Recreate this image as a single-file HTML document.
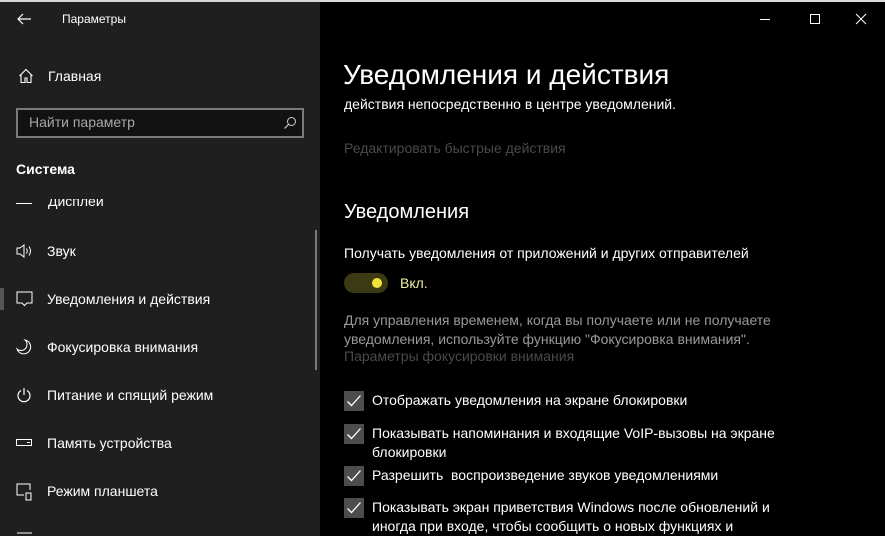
<!DOCTYPE html>
<html><head><meta charset="utf-8"><style>
*{margin:0;padding:0;box-sizing:border-box}
body{width:885px;height:536px;overflow:hidden;background:#000;font-family:"Segoe UI","Liberation Sans","DejaVu Sans",sans-serif;color:#fff;position:relative}
.abs{position:absolute;white-space:nowrap}
#side{position:absolute;left:0;top:0;width:320px;height:536px;background:#1f1f1f}
#topline{position:absolute;left:0;top:0;width:885px;height:2px;background:#d9d9d9}
.nav{font-size:14px;color:#fff}
.ic{position:absolute}
.cb{position:absolute;left:344px;width:20px;height:20px;background:#4d4d4d}
.cb svg{position:absolute;left:2px;top:2px}
.ct{font-size:14px;color:#fff;line-height:19px}
</style></head><body>
<div id="side">
 <svg class="ic" style="left:16px;top:12px" width="16" height="14" viewBox="0 0 16 14"><path d="M15 7H2M7 2L2 7l5 5" stroke="#fff" stroke-width="1.2" fill="none"/></svg>
 <div class="abs" style="left:62px;top:12px;font-size:12px">Параметры</div>
 <svg class="ic" style="left:18px;top:68px" width="16" height="16" viewBox="0 0 16 16"><path d="M1.5 8L8 1.5 14.5 8M3 6.5V14.5h4V10h2v4.5h4V6.5" stroke="#fff" stroke-width="1.1" fill="none"/></svg>
 <div class="abs nav" style="left:48px;top:68px">Главная</div>
 <div class="abs" style="left:16px;top:108px;width:288px;height:30px;border:2px solid #7a7a7a;background:#121212"></div>
 <div class="abs" style="left:29px;top:114px;font-size:14px;color:#a8a8a8">Найти параметр</div>
 <svg class="ic" style="left:283px;top:116px" width="14" height="14" viewBox="0 0 14 14"><circle cx="8.5" cy="5.5" r="4" stroke="#ccc" fill="none"/><path d="M5.5 8.5L1.5 12.5" stroke="#ccc" stroke-width="1.2"/></svg>
 <div class="abs" style="left:16px;top:161px;font-size:14px;font-weight:bold">Система</div>
 <div style="position:absolute;left:0;top:199px;width:320px;height:337px;overflow:hidden">
  <div class="abs nav" style="left:48px;top:-6px">Дисплей</div>
  <div style="position:absolute;left:16px;top:4px;width:16px;height:1px;background:#fff"></div>
  <svg class="ic" style="left:16px;top:44px" width="18" height="16" viewBox="0 0 18 16"><path d="M1 5h3l4-3v12l-4-3H1z" stroke="#fff" fill="none"/><path d="M10.5 5.5q1.5 2.5 0 5M13 3.5q3 4.5 0 9" stroke="#fff" fill="none"/></svg>
  <div class="abs nav" style="left:47px;top:44px">Звук</div>
  <div style="position:absolute;left:0;top:89px;width:4px;height:22px;background:#555"></div>
  <svg class="ic" style="left:16px;top:92px" width="17" height="17" viewBox="0 0 17 17"><path d="M1 1h15v11h-5l-2.5 2.5L6 12H1z" stroke="#fff" fill="none"/></svg>
  <div class="abs nav" style="left:47px;top:92px">Уведомления и действия</div>
  <svg class="ic" style="left:16px;top:140px" width="16" height="16" viewBox="0 0 16 16"><path d="M9 1a7 7 0 1 1-8 9A6 6 0 0 0 9 1z" stroke="#fff" fill="none"/></svg>
  <div class="abs nav" style="left:47px;top:140px">Фокусировка внимания</div>
  <svg class="ic" style="left:16px;top:188px" width="16" height="17" viewBox="0 0 16 17"><path d="M5 3.5a6 6 0 1 0 6 0" stroke="#fff" stroke-width="1.2" fill="none"/><path d="M8 1v7" stroke="#fff" stroke-width="1.2"/></svg>
  <div class="abs nav" style="left:47px;top:188px">Питание и спящий режим</div>
  <svg class="ic" style="left:16px;top:240px" width="17" height="8" viewBox="0 0 17 8"><rect x=".5" y=".5" width="15" height="6" stroke="#fff" fill="none"/><path d="M11 3.5h3" stroke="#fff"/></svg>
  <div class="abs nav" style="left:47px;top:236px">Память устройства</div>
  <svg class="ic" style="left:16px;top:284px" width="17" height="18" viewBox="0 0 17 18"><path d="M8 12H1V1h13v6" stroke="#fff" fill="none"/><path d="M10 17v-7h5v7z" stroke="#fff" fill="none"/></svg>
  <div class="abs nav" style="left:47px;top:284px">Режим планшета</div>
  <svg class="ic" style="left:16px;top:333px" width="17" height="10" viewBox="0 0 17 10"><path d="M1 1h15M1 5h10M1 9h15" stroke="#fff"/></svg>
  <div class="abs nav" style="left:47px;top:334px">Многозадачность</div>
 </div>
 <div style="position:absolute;left:315px;top:230px;width:2px;height:140px;background:#7a7a7a"></div>
</div>
<div id="topline"></div>
<div style="position:absolute;left:760px;top:19px;width:10px;height:1px;background:#fff"></div>
<div style="position:absolute;left:810px;top:14px;width:10px;height:10px;border:1px solid #fff"></div>
<svg class="ic" style="left:855px;top:13px" width="12" height="12" viewBox="0 0 12 12"><path d="M1 1l10 10M11 1L1 11" stroke="#fff"/></svg>

<div class="abs" style="left:343px;top:59px;font-size:28px;font-weight:300">Уведомления и действия</div>
<div class="abs" style="left:344px;top:96px;font-size:14px">действия непосредственно в центре уведомлений.</div>
<div class="abs" style="left:344px;top:140px;font-size:14px;color:#4a4a4a">Редактировать быстрые действия</div>
<div class="abs" style="left:344px;top:201px;font-size:20px">Уведомления</div>
<div class="abs" style="left:344px;top:245px;font-size:14px">Получать уведомления от приложений и других отправителей</div>
<div style="position:absolute;left:344px;top:273px;width:44px;height:20px;border-radius:10px;background:#3b3a14"></div>
<div style="position:absolute;left:372px;top:278px;width:10px;height:10px;border-radius:5px;background:#f2e33a"></div>
<div class="abs" style="left:400px;top:275px;font-size:14px;color:#f0f0a0">Вкл.</div>
<div class="abs" style="left:344px;top:311px;font-size:14px;color:#999;line-height:19px">Для управления временем, когда вы получаете или не получаете<br>уведомления, используйте функцию "Фокусировка внимания".</div>
<div class="abs" style="left:344px;top:348px;font-size:14px;color:#4a4a4a">Параметры фокусировки внимания</div>

<div class="cb" style="top:391px"><svg width="16" height="16" viewBox="0 0 16 16"><path d="M1.5 8.5l4 4 9-10" stroke="#fff" stroke-width="1.3" fill="none"/></svg></div>
<div class="abs ct" style="left:372px;top:391px">Отображать уведомления на экране блокировки</div>
<div class="cb" style="top:424px"><svg width="16" height="16" viewBox="0 0 16 16"><path d="M1.5 8.5l4 4 9-10" stroke="#fff" stroke-width="1.3" fill="none"/></svg></div>
<div class="abs ct" style="left:372px;top:424px">Показывать напоминания и входящие VoIP-вызовы на экране<br>блокировки</div>
<div class="cb" style="top:466px"><svg width="16" height="16" viewBox="0 0 16 16"><path d="M1.5 8.5l4 4 9-10" stroke="#fff" stroke-width="1.3" fill="none"/></svg></div>
<div class="abs ct" style="left:372px;top:466px">Разрешить&nbsp; воспроизведение звуков уведомлениями</div>
<div class="cb" style="top:498px"><svg width="16" height="16" viewBox="0 0 16 16"><path d="M1.5 8.5l4 4 9-10" stroke="#fff" stroke-width="1.3" fill="none"/></svg></div>
<div class="abs ct" style="left:372px;top:498px">Показывать экран приветствия Windows после обновлений и<br>иногда при входе, чтобы сообщить о новых функциях и</div>
</body></html>
